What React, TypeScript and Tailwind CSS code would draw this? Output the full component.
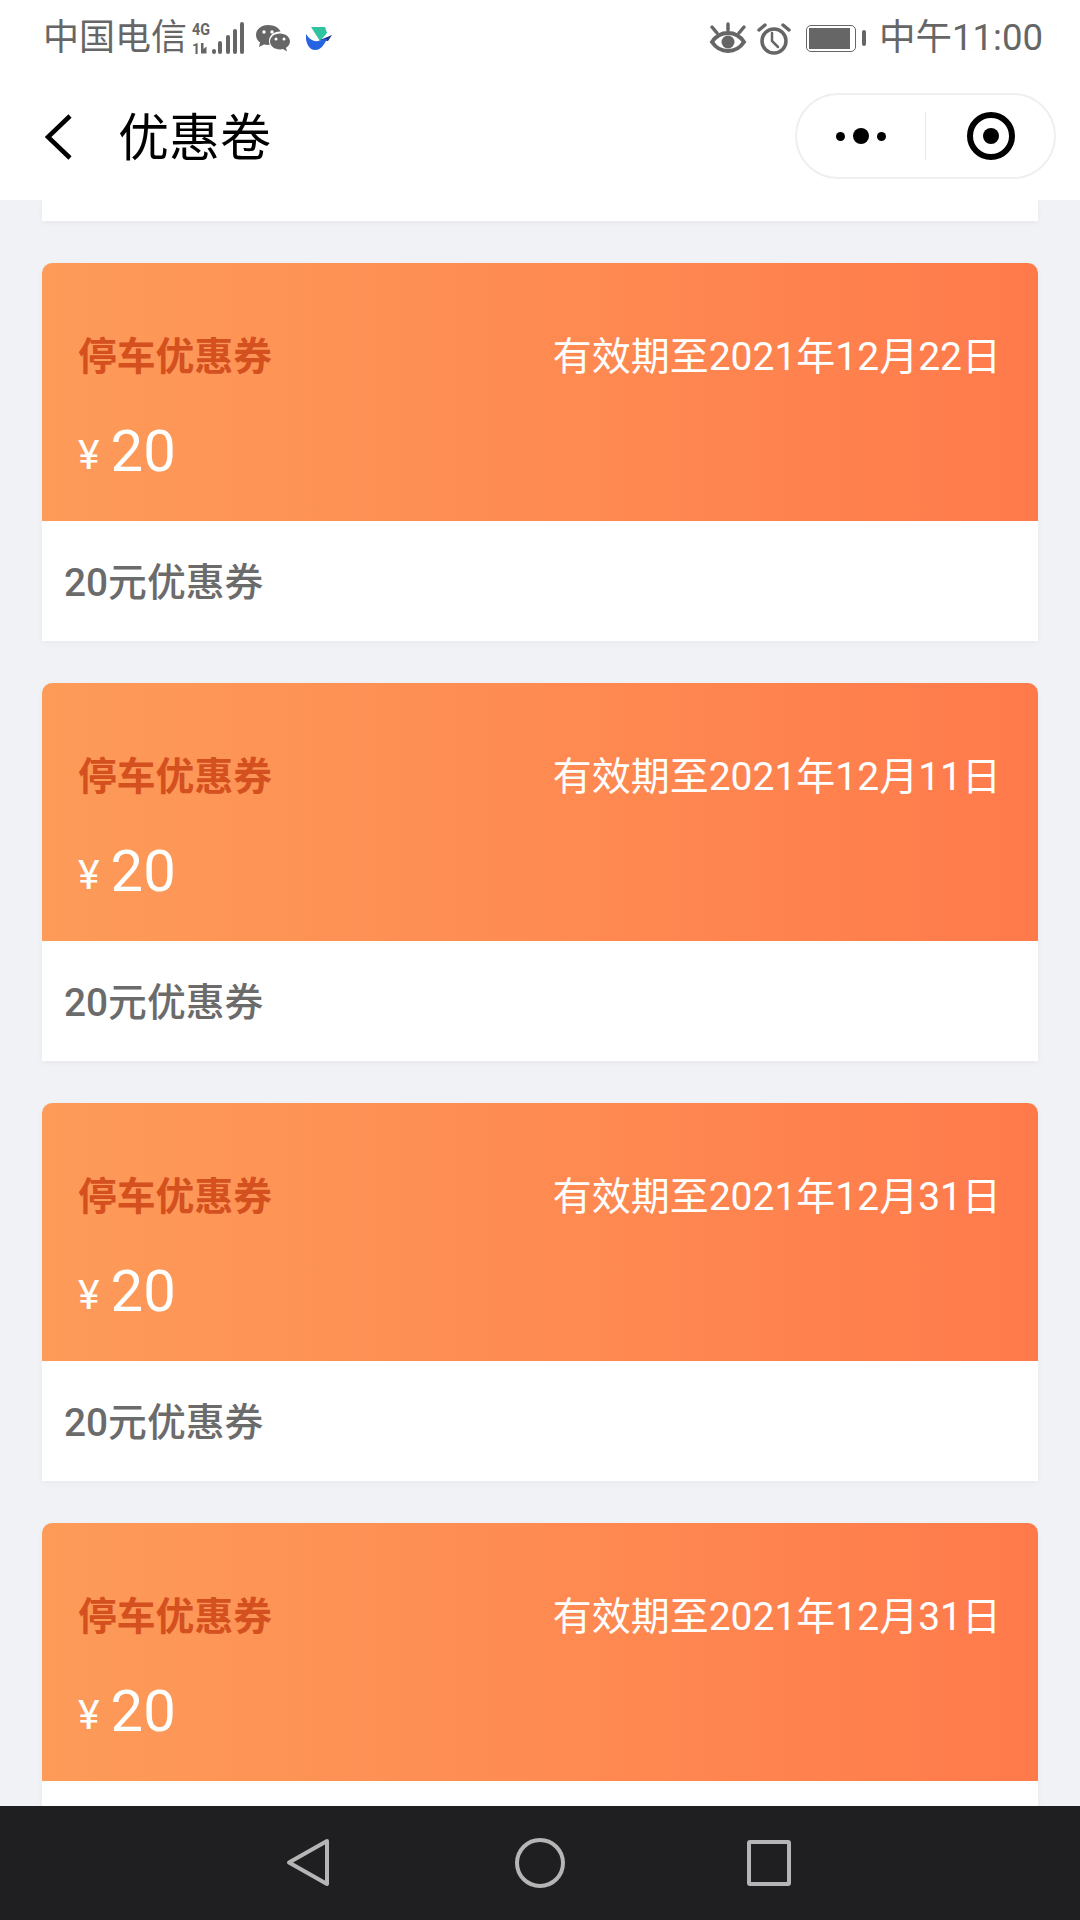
const font = "font-['Roboto','Noto_Sans_CJK_SC','Noto_Sans',sans-serif]"

// last card runs under the nav bar, its label is never visible
const coupons = [
  { date: '2021年12月22日', label: '20元优惠券' },
  { date: '2021年12月11日', label: '20元优惠券' },
  { date: '2021年12月31日', label: '20元优惠券' },
  { date: '2021年12月31日', label: '' },
]

function StatusLeft() {
  return (
    <div className="flex items-center">
      <span className="text-[36px] leading-none text-[#666666]">中国电信</span>
      <svg width="56" height="36" viewBox="0 0 56 36" className="ml-[5px] mt-[2px] overflow-visible" fill="#666666">
        <text x="0" y="14" fontSize="17" fontWeight="700" fontFamily="Roboto, sans-serif" textLength="18" lengthAdjust="spacingAndGlyphs">4G</text>
        <text x="0" y="33" fontSize="14" fontWeight="700" fontFamily="Roboto, sans-serif">1</text>
        <path d="M9 22h2.500v6l3-2.500v7H9z" />
        <rect x="20" y="28" width="4" height="5" rx="2" />
        <rect x="26" y="20" width="4" height="13" rx="2" />
        <rect x="34" y="14" width="4" height="19" rx="2" />
        <rect x="41" y="8" width="4" height="25" rx="2" />
        <rect x="48" y="1" width="4" height="32" rx="2" />
      </svg>
      <svg width="36" height="31" viewBox="0 0 36 31" className="ml-[7px] mt-[3px]">
        <path fill="#666666" d="M13 1C6 1 1 5.500 1 11c0 3 1.600 5.600 4 7.400L4 23l5-2.600c1.200.3 2.600.5 4 .5.600 0 1.200 0 1.800-.1C14 19 14 18 14 17c0-5.500 5-9.500 11-9.500h.6C24 3.800 19 1 13 1z" />
        <path fill="#666666" d="M25 9.500c-5.500 0-10 3.600-10 8s4.500 8 10 8c1 0 2-.1 3-.4l4 2.400-1-3.800c2.500-1.500 4-3.800 4-6.200 0-4.400-4.500-8-10-8z" />
        <circle cx="9" cy="8" r="1.700" fill="#fff" />
        <circle cx="17" cy="8" r="1.700" fill="#fff" />
        <circle cx="21" cy="15" r="1.500" fill="#fff" />
        <circle cx="29" cy="15" r="1.500" fill="#fff" />
      </svg>
      <svg width="26" height="23" viewBox="0 0 26 23" className="ml-[15px] mt-[1px]">
        <path fill="#2fc3a0" d="M5 0h14l2 6-7 8z" />
        <path fill="#1d2f8f" d="M14 13l12-5-4 6z" />
        <path fill="#2563e0" d="M0 7c3 5 8 8 12 7 2-.5 5-2 9-2-3 6-6 11-12 11C3 23-1 15 0 7z" />
      </svg>
    </div>
  )
}

function StatusRight() {
  return (
    <div className="flex items-center">
      <svg width="38" height="32" viewBox="0 0 38 32" fill="none" stroke="#666666">
        <path strokeWidth="4" d="M3 20c4-6 9-9 16-9s12 3 16 9c-4 6-9 9-16 9S7 26 3 20z" />
        <circle cx="19" cy="20" r="6.500" fill="#666666" stroke="none" />
        <path strokeWidth="3.500" strokeLinecap="round" d="M19 2v6M3 5l5 6M35 5l-5 6" />
      </svg>
      <svg width="34" height="33" viewBox="0 0 34 33" fill="none" stroke="#666666" className="ml-[10px]">
        <circle cx="17" cy="19" r="12" strokeWidth="3.500" />
        <path strokeWidth="2.500" strokeLinecap="round" d="M15 11v8l6 6" />
        <path strokeWidth="3.500" strokeLinecap="round" d="M2 8l6-5M32 8l-6-5" />
      </svg>
      <div className="ml-[15px] flex items-center">
        <div className="h-[27px] w-[50px] rounded-[5px] border-[1.500px] border-[#666666] p-[2px]">
          <div className="h-full w-[41px] bg-[#666666]" />
        </div>
        <div className="ml-[6px] h-[16px] w-[4px] rounded-[2px] bg-[#666666]" />
      </div>
      <span className="ml-[13px] text-[36.500px] leading-none text-[#666666]">中午11:00</span>
    </div>
  )
}

function Capsule() {
  return (
    <div className="flex h-[86px] w-[261px] items-center rounded-full border-2 border-[#efefef] bg-white">
      <div className="flex w-[128px] items-center justify-center gap-[8px]">
        <div className="size-[9px] rounded-full bg-black" />
        <div className="size-[16px] rounded-full bg-black" />
        <div className="size-[9px] rounded-full bg-black" />
      </div>
      <div className="h-[48px] w-px bg-[#e8e8e8]" />
      <div className="flex flex-1 items-center justify-center pl-[2px]">
        <div className="flex size-[48px] items-center justify-center rounded-full border-[6px] border-black">
          <div className="size-[16px] rounded-full bg-black" />
        </div>
      </div>
    </div>
  )
}

function Coupon({ date, label }: { date: string; label: string }) {
  return (
    <div className="shrink-0 overflow-hidden rounded-t-[10px] bg-white shadow-[0_2px_6px_rgba(0,0,0,0.04)]">
      <div className="h-[258px] bg-gradient-to-r from-[#fd9b59] to-[#ff7a4b] pl-[36px] pr-[37px] pt-[66px]">
        <div className="flex h-[56px] items-center justify-between">
          <span className="text-[38.800px] font-bold leading-none text-[#d4501f]">停车优惠券</span>
          <span className="text-[39px] leading-none text-white">有效期至{date}</span>
        </div>
        <div className="mt-[38px] flex h-[56px] items-center text-white">
          <span className="mt-[9px] text-[41px] leading-none">¥</span>
          <span className="ml-[11px] text-[58px] leading-none">20</span>
        </div>
      </div>
      <div className="flex h-[120px] items-center pl-[22px] pt-[5px] text-[38.800px] font-medium leading-none text-[#6b6b6b]">
        {label}
      </div>
    </div>
  )
}

export default function App() {
  return (
    <div className={`flex h-[1920px] w-[1080px] flex-col overflow-hidden bg-[#f1f2f6] ${font}`}>
      {/* header */}
      <div className="relative z-10 h-[200px] shrink-0 bg-white">
        <div className="flex h-[76px] items-center justify-between pl-[43px] pr-[37px]">
          <StatusLeft />
          <StatusRight />
        </div>
        <div className="flex items-center justify-between pl-[45px] pr-[24px] pt-[17px]">
          <div className="flex items-center pt-[1px]">
            <svg width="28" height="46" viewBox="0 0 28 46" fill="none" stroke="#000" strokeWidth="4.500">
              <path d="M25 2L3 23l22 21" />
            </svg>
            <span className="ml-[45px] mt-[3px] text-[51px] leading-none text-black">优惠卷</span>
          </div>
          <Capsule />
        </div>
      </div>

      {/* list */}
      <div className="flex min-h-0 flex-1 flex-col gap-[42px] overflow-hidden px-[42px]">
        <div className="h-[21px] shrink-0 bg-white shadow-[0_2px_6px_rgba(0,0,0,0.04)]" />
        {coupons.map((c, i) => (
          <Coupon key={i} date={c.date} label={c.label} />
        ))}
      </div>

      {/* android nav */}
      <div className="flex h-[114px] shrink-0 items-start bg-[#1f1f21] pl-[286px] pt-[32px]">
        <svg width="44" height="49" viewBox="0 0 44 49" fill="none" stroke="#b5b5b5" strokeWidth="4" strokeLinejoin="round">
          <path d="M41 3L3 24.500 41 46z" />
        </svg>
        <div className="ml-[185px] size-[50px] rounded-full border-[4px] border-[#b5b5b5]" />
        <div className="ml-[182px] mt-[2px] h-[46px] w-[44px] rounded-[3px] border-[4px] border-[#b5b5b5]" />
      </div>
    </div>
  )
}
